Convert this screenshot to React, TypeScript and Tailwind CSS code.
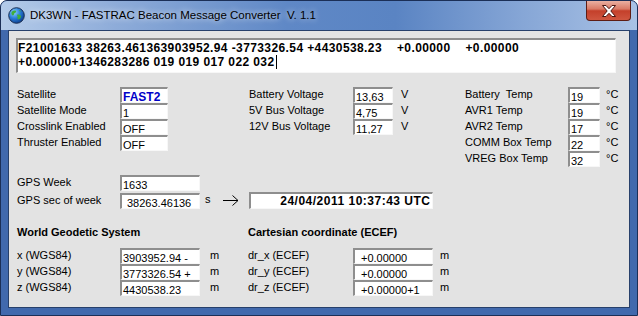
import React from 'react';

const boxBase =
  'h-[16px] bg-white border-t-2 border-l-2 border-r border-b border-t-[#8e8e8e] border-l-[#8e8e8e] border-r-[#f7f7f7] border-b-[#f7f7f7] pt-[3px] text-[11px] leading-[11px] whitespace-pre overflow-hidden';

type FieldProps = {
  label: string;
  value: React.ReactNode;
  lw: string;
  bw: string;
  unit?: string;
  um?: string;
  pad?: string;
};

function Field({ label, value, lw, bw, unit, um, pad = 'pl-[1px]' }: FieldProps) {
  return (
    <div className="flex h-[16px] items-start">
      <div className={`${lw} shrink-0 text-[11px] leading-[14px] whitespace-nowrap`}>{label}</div>
      <div className={`${bw} ${boxBase} ${pad} shrink-0`}>{value}</div>
      {unit && <div className={`${um} text-[11px] leading-[14px]`}>{unit}</div>}
    </div>
  );
}

function Globe() {
  return (
    <svg width="17" height="17" viewBox="0 0 17 17">
      <defs>
        <radialGradient id="sea" cx="0.35" cy="0.3" r="0.75">
          <stop offset="0" stopColor="#8fd0ff" />
          <stop offset="0.5" stopColor="#2a7fd8" />
          <stop offset="1" stopColor="#0b3c8c" />
        </radialGradient>
      </defs>
      <circle cx="8.5" cy="8.5" r="7.8" fill="url(#sea)" stroke="#1c2f52" strokeWidth="1" />
      <path d="M4 4.5c1.5-1 3-1.2 4-.6.6.8-.4 1.6-1.3 2.1-.9.6-.3 1.7-1.3 2.3-1 .4-1.8-.6-2-1.8-.1-.8.1-1.5.6-2z" fill="#3fae3a" />
      <path d="M9.5 7.5c1.2-.4 2.6.2 3.3 1.3.5 1-.1 2.4-1.2 3.2-.9.7-2 .4-2.2-.7-.2-.8.5-1.3.1-2-.4-.8-.7-1.5 0-1.8z" fill="#3fae3a" />
      <path d="M11 3.2c.8 0 1.7.5 2.1 1.1-.5.3-1.3.2-1.8-.2-.3-.3-.5-.6-.3-.9z" fill="#3fae3a" />
    </svg>
  );
}

function CloseX() {
  return (
    <svg width="14" height="12" viewBox="0 0 14 12">
      <polygon
        points="0.5,0.5 4,0.5 7,3.7 10,0.5 13.5,0.5 8.8,6 13.5,11.5 10,11.5 7,8.3 4,11.5 0.5,11.5 5.2,6"
        fill="#ffffff"
        stroke="#4a1410"
        strokeWidth="1"
        strokeLinejoin="round"
      />
    </svg>
  );
}

function Arrow() {
  return (
    <svg width="16" height="11" viewBox="0 0 16 11">
      <path d="M0 5.5h15M9.5 0.5l5.5 5-5.5 5" fill="none" stroke="#000" strokeWidth="1" />
    </svg>
  );
}

export default function App() {
  return (
    <div className="w-[638px] h-[316px] flex flex-col overflow-hidden rounded-t-[7px] border border-[#1b2f57] bg-[#4169ad] font-['Liberation_Sans',Arial,sans-serif] text-black">
      {/* title bar */}
      <div className="flex h-[29px] shrink-0 items-start bg-[linear-gradient(90deg,#b4cbe9_0%,#8eacd9_18%,#5f88c6_45%,#5a84c3_62%,#86a6d6_82%,#a9c2e5_100%)]">
        <div className="flex h-[29px] items-center pl-[7px]">
          <Globe />
          <span className="ml-[5px] text-[11.5px] whitespace-pre [text-shadow:0_0_6px_rgba(255,255,255,0.95)]">
            DK3WN - FASTRAC Beacon Message Converter  V. 1.1
          </span>
        </div>
        <div className="ml-auto mr-[6px] flex h-[20px] w-[45px] items-center justify-center rounded-b-[4px] border border-t-0 border-[#5e1d14] bg-[linear-gradient(180deg,#eab0a2_0%,#d97a66_42%,#c4402b_52%,#cf5640_100%)]">
          <CloseX />
        </div>
      </div>

      {/* client area */}
      <div className="mx-[7px] mb-[7px] flex-1 border border-[#27406b] bg-[#e3e3e3] pl-[7px] pt-[7px]">
        <div className="h-[35px] w-[600px] bg-white border-t-2 border-l-2 border-r border-b border-t-[#8e8e8e] border-l-[#8e8e8e] border-r-[#f7f7f7] border-b-[#f7f7f7] pt-[1px] text-[12px] font-bold leading-[14px] tracking-[0.4px] whitespace-pre">
          <div>F21001633 38263.461363903952.94 -3773326.54 +4430538.23    +0.00000    +0.00000</div>
          <div className="flex items-center">
            +0.00000+1346283286 019 019 017 022 032
            <span className="ml-[1px] inline-block h-[14px] w-[1px] bg-black" />
          </div>
        </div>

        {/* status fields */}
        <div className="ml-[1px] mt-[14px] flex items-start">
          <div className="w-[232px] shrink-0">
            <Field
              label="Satellite"
              lw="w-[103px]"
              bw="w-[48px]"
              value={<span className="text-[12px] font-bold text-[#0000c8]">FAST2</span>}
            />
            <Field label="Satellite Mode" lw="w-[103px]" bw="w-[48px]" value="1" />
            <Field label="Crosslink Enabled" lw="w-[103px]" bw="w-[48px]" value="OFF" />
            <Field label="Thruster Enabled" lw="w-[103px]" bw="w-[48px]" value="OFF" />
          </div>
          <div className="w-[216px] shrink-0">
            <Field label="Battery Voltage" lw="w-[104px]" bw="w-[40px]" value="13,63" unit="V" um="ml-[8px]" />
            <Field label="5V Bus Voltage" lw="w-[104px]" bw="w-[40px]" value="4,75" unit="V" um="ml-[8px]" />
            <Field label="12V Bus Voltage" lw="w-[104px]" bw="w-[40px]" value="11,27" unit="V" um="ml-[8px]" />
          </div>
          <div>
            <Field label="Battery  Temp" lw="w-[103px] whitespace-pre" bw="w-[32px]" value="19" unit="°C" um="ml-[6px]" />
            <Field label="AVR1 Temp" lw="w-[103px]" bw="w-[32px]" value="19" unit="°C" um="ml-[6px]" />
            <Field label="AVR2 Temp" lw="w-[103px]" bw="w-[32px]" value="17" unit="°C" um="ml-[6px]" />
            <Field label="COMM Box Temp" lw="w-[103px]" bw="w-[32px]" value="22" unit="°C" um="ml-[6px]" />
            <Field label="VREG Box Temp" lw="w-[103px]" bw="w-[32px]" value="32" unit="°C" um="ml-[6px]" />
          </div>
        </div>

        {/* GPS time */}
        <div className="ml-[1px] mt-[8px]">
          <Field label="GPS Week" lw="w-[103px]" bw="w-[80px]" value="1633" />
          <div className="mt-[1px] flex items-end">
            <Field label="GPS sec of week" lw="w-[103px]" bw="w-[80px]" value="38263.46136" pad="pl-[5px]" />
            <div className="ml-[5px] self-start text-[11px] leading-[14px]">s</div>
            <div className="ml-[12px] mb-[3px] flex">
              <Arrow />
            </div>
            <div className="ml-[10px] h-[17px] w-[184px] bg-white border-t-2 border-l-2 border-r border-b border-t-[#8e8e8e] border-l-[#8e8e8e] border-r-[#f7f7f7] border-b-[#f7f7f7] pr-[1px] text-right text-[12px] font-bold leading-[14px] tracking-[0.5px] whitespace-nowrap">
              24/04/2011 10:37:43 UTC
            </div>
          </div>
        </div>

        {/* coordinates */}
        <div className="ml-[1px] mt-[16px] flex items-start">
          <div className="w-[231px] shrink-0">
            <div className="text-[11px] font-bold leading-[14px]">World Geodetic System</div>
            <div className="mt-[9px]">
              <Field label="x (WGS84)" lw="w-[103px]" bw="w-[80px]" value="3903952.94 -" unit="m" um="ml-[10px]" />
              <Field label="y (WGS84)" lw="w-[103px]" bw="w-[80px]" value="3773326.54 +" unit="m" um="ml-[10px]" />
              <Field label="z (WGS84)" lw="w-[103px]" bw="w-[80px]" value="4430538.23" unit="m" um="ml-[10px]" />
            </div>
          </div>
          <div>
            <div className="text-[11px] font-bold leading-[14px]">Cartesian coordinate (ECEF)</div>
            <div className="mt-[9px]">
              <Field label="dr_x (ECEF)" lw="w-[105px]" bw="w-[80px]" value="+0.00000" unit="m" um="ml-[7px]" pad="pl-[6px]" />
              <Field label="dr_y (ECEF)" lw="w-[105px]" bw="w-[80px]" value="+0.00000" unit="m" um="ml-[7px]" pad="pl-[6px]" />
              <Field label="dr_z (ECEF)" lw="w-[105px]" bw="w-[80px]" value="+0.00000+1" unit="m" um="ml-[7px]" pad="pl-[6px]" />
            </div>
          </div>
        </div>
      </div>
    </div>
  );
}
